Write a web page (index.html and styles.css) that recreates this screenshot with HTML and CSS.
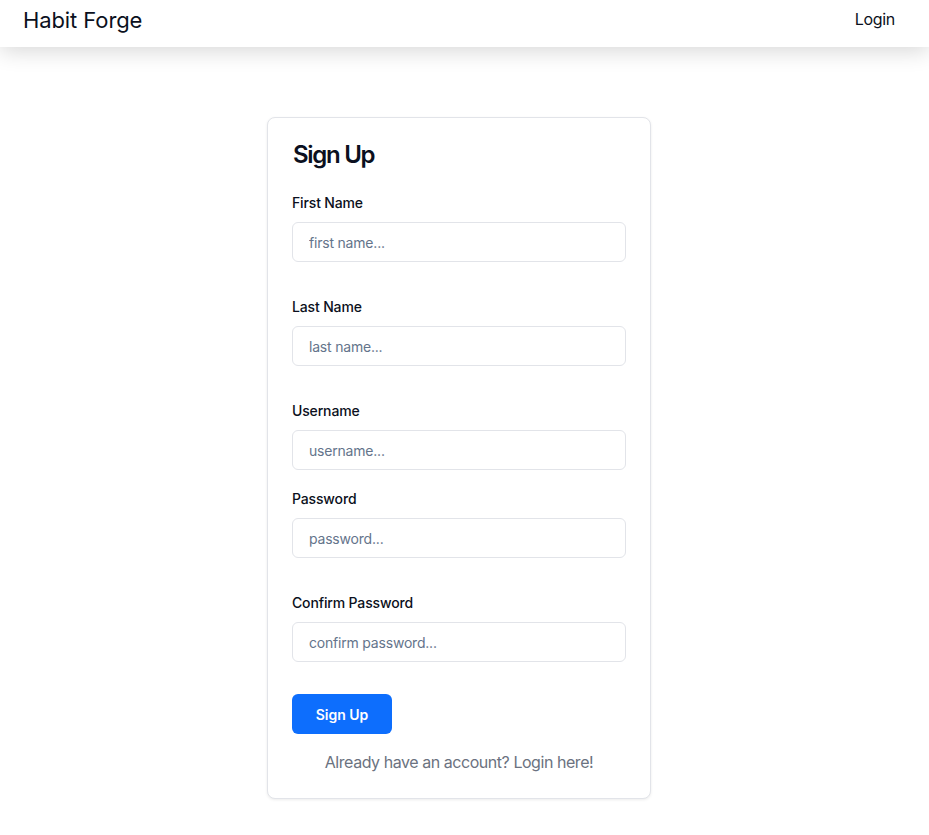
FILE: index.html
```html
<!DOCTYPE html>
<html lang="en">
<head>
<meta charset="utf-8">
<title>Habit Forge - Sign Up</title>
<link rel="stylesheet" href="styles.css">
</head>
<body>
<header class="topbar">
  <div class="brand">Habit Forge</div>
  <a class="nav-link" href="#">Login</a>
</header>
<main class="page">
  <form class="card">
    <h1 class="card-title">Sign Up</h1>
    <div class="field tall">
      <label class="label">First Name</label>
      <input class="input" type="text" placeholder="first name...">
    </div>
    <div class="field tall">
      <label class="label">Last Name</label>
      <input class="input" type="text" placeholder="last name...">
    </div>
    <div class="field">
      <label class="label">Username</label>
      <input class="input" type="text" placeholder="username...">
    </div>
    <div class="field tall">
      <label class="label">Password</label>
      <input class="input" type="password" placeholder="password...">
    </div>
    <div class="field last">
      <label class="label">Confirm Password</label>
      <input class="input" type="password" placeholder="confirm password...">
    </div>
    <button class="btn" type="button">Sign Up</button>
    <p class="footer-text">Already have an account? Login here!</p>
  </form>
</main>
</body>
</html>
```
FILE: styles.css
```css
* { box-sizing: border-box; }
html, body { margin: 0; padding: 0; background: #ffffff; }
body {
  font-family: Inter, "Noto Sans", "Liberation Sans", sans-serif;
  color: #0f172a;
}
.topbar {
  height: 47px;
  display: flex;
  justify-content: space-between;
  align-items: flex-start;
  padding: 4px 34px 0 23px;
  background: #ffffff;
  box-shadow: 0 4px 22px rgba(0, 0, 0, 0.16);
  position: relative;
  z-index: 1;
}
.brand {
  font-size: 22px;
  line-height: 32px;
  font-weight: 400;
  letter-spacing: -0.1px;
  color: #0b1020;
}
.nav-link {
  font-size: 16px;
  line-height: 24px;
  margin-top: 3px;
  letter-spacing: -0.3px;
  color: #0b1020;
  text-decoration: none;
}
.page {
  padding-top: 70px;
  padding-bottom: 36px;
}
.card {
  width: 384px;
  margin-left: calc(50% - 197.5px);
  border: 1px solid #e2e4e9;
  border-radius: 8px;
  box-shadow: 0 1px 3px rgba(0, 0, 0, 0.08);
  padding: 24px 24px 24px 24px;
  background: #ffffff;
}
.card-title {
  margin: 1px 0 26px 1px;
  font-size: 24px;
  line-height: 24px;
  font-weight: 600;
  letter-spacing: -1.3px;
  color: #0b1020;
}
.field { display: flex; flex-direction: column; margin-bottom: 19px; }
.field.tall { margin-bottom: 35px; }
.field.last { margin-bottom: 32px; }
.label {
  font-size: 14px;
  line-height: 20px;
  font-weight: 500;
  letter-spacing: -0.15px;
  margin-bottom: 9px;
  color: #0b1020;
}
.input {
  height: 40px;
  width: 100%;
  border: 1px solid #e2e4e9;
  border-radius: 6px;
  padding: 0 16px;
  font-family: inherit;
  font-size: 14px;
  letter-spacing: -0.2px;
  color: #0f172a;
  background: #ffffff;
  outline: none;
}
.input::placeholder { color: #64748b; }
.btn {
  display: block;
  width: 100px;
  height: 40px;
  border: none;
  border-radius: 6px;
  background: #0d6efd;
  color: #ffffff;
  font-family: inherit;
  font-size: 14px;
  font-weight: 600;
  cursor: pointer;
}
.footer-text {
  margin: 16px 0 0 0;
  text-align: center;
  font-size: 16px;
  line-height: 24px;
  letter-spacing: -0.45px;
  color: #6b7280;
}
```
